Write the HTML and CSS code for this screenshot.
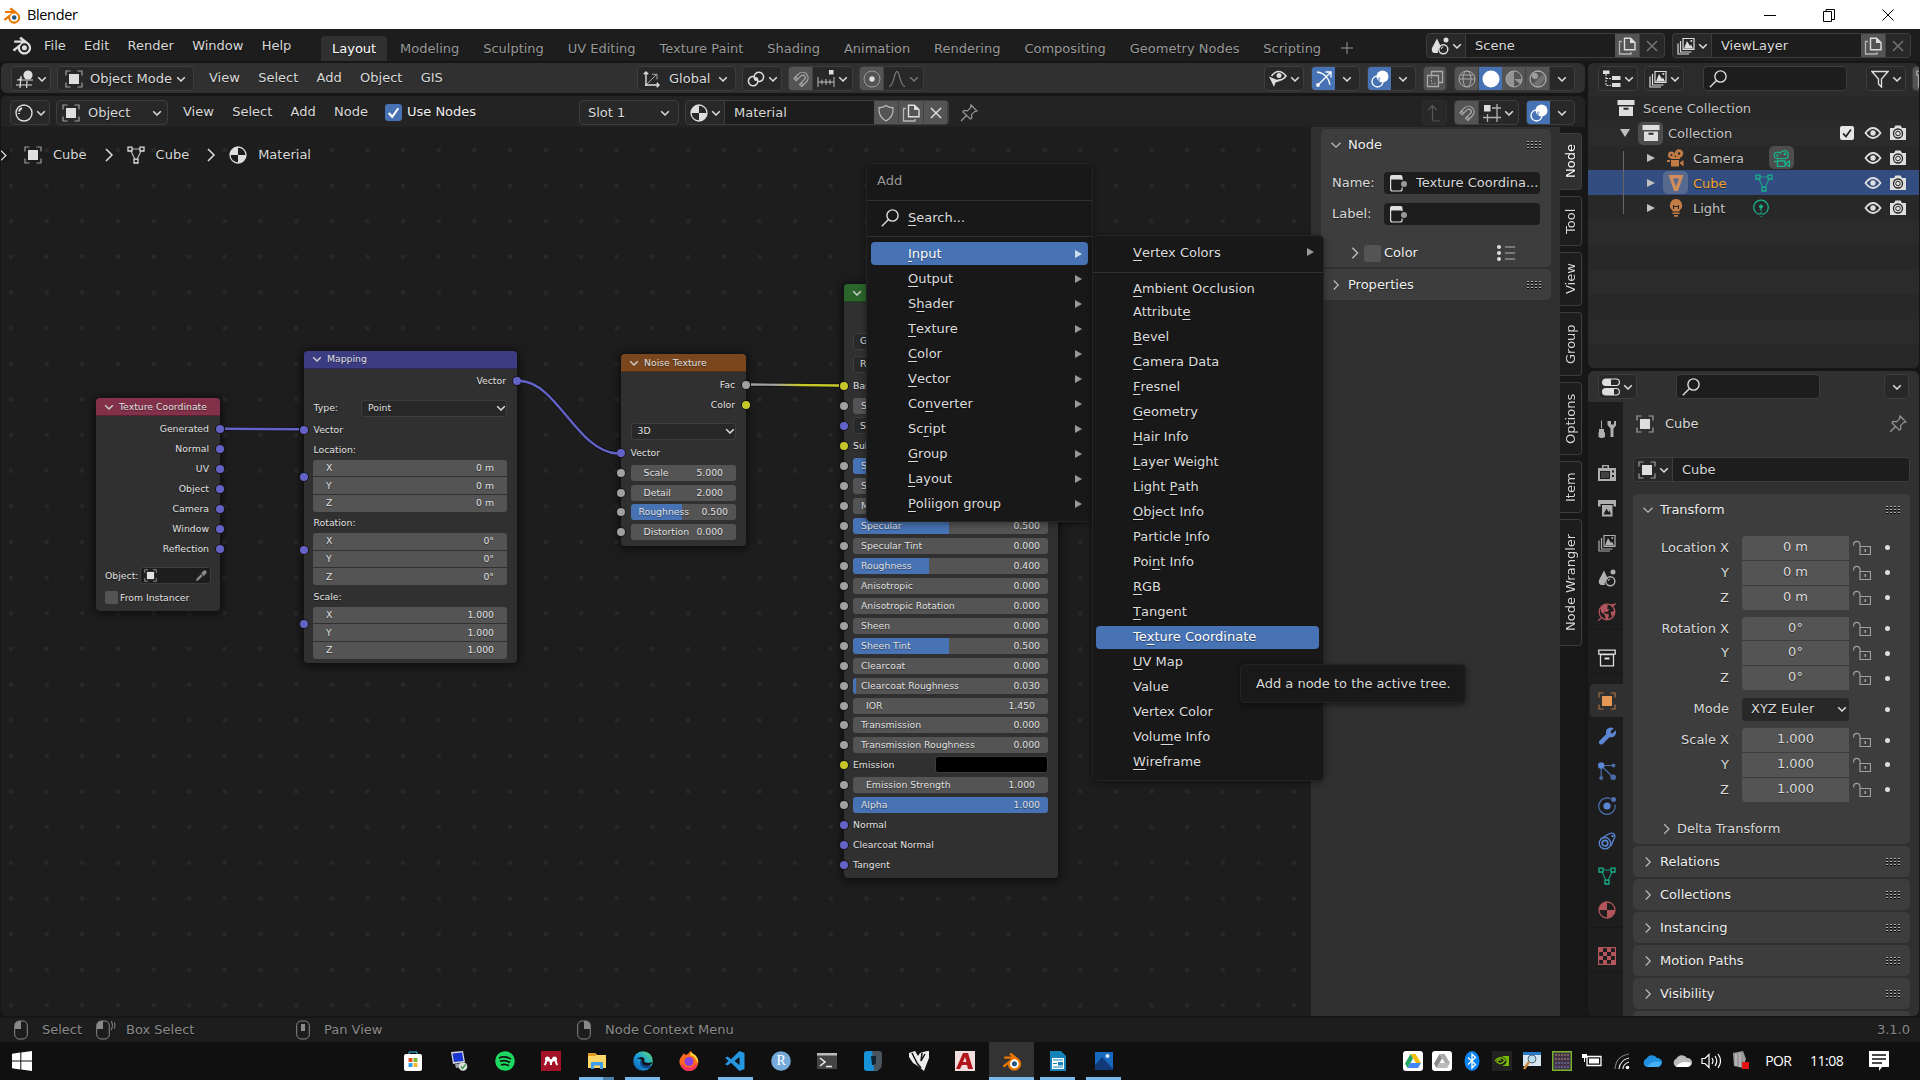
FILE: index.html
```html
<!DOCTYPE html>
<html lang="en">
<head>
<meta charset="utf-8">
<title>Blender</title>
<link rel="stylesheet" href="styles.css">
</head>
<body>
<svg class="sprite" aria-hidden="true">
  <symbol id="chev" viewBox="0 0 10 10"><path d="M1.2 3.2 5 7l3.8-3.8" fill="none" stroke="currentColor" stroke-width="1.5"/></symbol>
  <symbol id="right" viewBox="0 0 16 16"><path d="M5 2 11 8l-6 6" fill="none" stroke="currentColor" stroke-width="1.5"/></symbol>
  <symbol id="down" viewBox="0 0 16 16"><path d="M2 5 8 11l6-6" fill="none" stroke="currentColor" stroke-width="1.5"/></symbol>
  <symbol id="x" viewBox="0 0 16 16"><path d="M3.500 3.500l9 9M12.500 3.500l-9 9" fill="none" stroke="currentColor" stroke-width="1.300"/></symbol>
  <symbol id="logo" viewBox="0 0 18 18"><path d="M.5 13.300 8.500 7H2V5h6.700L6.500 3.200 8.200 1.500l7.300 6a6 6 0 1 1-10.300 4.700L2.300 14.800z" fill="currentColor"/><circle cx="11.200" cy="11.500" r="4" fill="var(--hole,#1d1d1d)"/><circle cx="11.200" cy="11.500" r="2.300" fill="var(--eye,currentColor)"/></symbol>
  <symbol id="object" viewBox="0 0 18 18"><path d="M1 5.500V1h4.500M12.500 1H17v4.500M17 12.500V17h-4.500M5.500 17H1v-4.500" fill="none" stroke="currentColor" stroke-width="1.200" opacity=".65"/><path d="M4 4h10v10H4z" fill="currentColor"/></symbol>
  <symbol id="mesh" viewBox="0 0 18 18"><path d="M4.200 5.500 8 13.500M13.800 5.500 10 13.500M5 3h8" fill="none" stroke="currentColor" stroke-width="1.200" opacity=".8"/><path d="M1 1.200h4V5H1zM13 1.200h4V5h-4zM7 13.200h4V17H7z" fill="none" stroke="currentColor" stroke-width="1.300"/></symbol>
  <symbol id="material" viewBox="0 0 18 18"><circle cx="9" cy="9" r="8" fill="none" stroke="currentColor" stroke-width="1.300"/><path d="M9 1v8H1a8 8 0 0 1 8-8zM9 9h8a8 8 0 0 1-8 8z" fill="currentColor"/></symbol>
  <symbol id="view3d" viewBox="0 0 18 18"><circle cx="12" cy="5" r="4.600" fill="currentColor"/><path d="M1 10h16M0 15h16M5 6 4 18M11 11l-.4 7M2 10l4-2" fill="none" stroke="currentColor" stroke-width="1.200"/></symbol>
  <symbol id="shader" viewBox="0 0 18 18"><circle cx="9" cy="9" r="8" fill="none" stroke="currentColor" stroke-width="1.400"/><path d="M4 7.500Q4.500 5 7 4M4 10V9" fill="none" stroke="currentColor" stroke-width="2"/></symbol>
  <symbol id="axes" viewBox="0 0 18 18"><path d="M3 16V2M.8 4.300 3 2l2.200 2.300M2 15h14M13.700 12.700 16 15l-2.300 2.300" fill="none" stroke="currentColor" stroke-width="1.400"/><path d="M3 15 13.500 4.500M9 4.300h5v5" fill="none" stroke="currentColor" opacity=".7"/></symbol>
  <symbol id="pivot" viewBox="0 0 18 18"><path d="M9.800 8.200A4.700 4.700 0 1 1 7 6.500M8.200 9.800A4.700 4.700 0 1 1 11 11.500" fill="none" stroke="currentColor" stroke-width="1.500"/><circle cx="9" cy="9" r="2" fill="currentColor"/></symbol>
  <symbol id="magnet" viewBox="0 0 18 18"><path d="M2 8.500 6.800 3.600a5.600 5.600 0 0 1 7.900 7.900L9.800 16.400l-2.200-2.200 4.900-4.900a2.400 2.400 0 0 0-3.500-3.500L4.200 10.700zM3.500 6.900l2.200 2.200M9.200 12.600l2.200 2.200" fill="none" stroke="currentColor" stroke-width="1.200"/></symbol>
  <symbol id="ticks" viewBox="0 0 18 18"><path d="M12 0h4.500v4.500H12z" fill="currentColor"/><path d="M1 7v10M1 12h16M17 7v10M5 9.500v5M9 9v6M13 9.500v5" fill="none" stroke="currentColor" opacity=".8"/></symbol>
  <symbol id="prop" viewBox="0 0 18 18"><circle cx="9" cy="9" r="8" fill="none" stroke="currentColor" opacity=".5"/><circle cx="9" cy="9" r="2.700" fill="currentColor"/></symbol>
  <symbol id="curve" viewBox="0 0 18 18"><path d="M1 16.500c5 0 5-15 8-15s3 15 8 15" fill="none" stroke="currentColor" stroke-width="1.300"/></symbol>
  <symbol id="vis" viewBox="0 0 18 18"><path d="M2.500 6Q9.500-3 17 6q-4 5-8.500 4" fill="none" stroke="currentColor" stroke-width="1.700"/><circle cx="10" cy="5.500" r="2.500" fill="currentColor"/><path d="M0 6.500 11 11l-4.500 1.500L5 17z" fill="currentColor"/></symbol>
  <symbol id="gizmo" viewBox="0 0 18 18"><path d="M2 2c7 1 12 6 13 13M2 16 15.500 2.500M10.500 2H16v5.500" fill="none" stroke="currentColor" stroke-width="1.300"/><circle cx="3" cy="15" r="1.900" fill="currentColor"/></symbol>
  <symbol id="overlay" viewBox="0 0 18 18"><circle cx="11.500" cy="6.500" r="6" fill="currentColor"/><circle cx="6.500" cy="11.500" r="5.500" fill="none" stroke="currentColor" stroke-width="1.300"/><path d="M7 7.500h2.500L9 11H6z" fill="#4772b3" opacity=".5"/></symbol>
  <symbol id="xray" viewBox="0 0 18 18"><path d="M1.500 5.500h11v11h-11zM5.500 5.500v-4h11v11h-4" fill="none" stroke="currentColor" stroke-width="1.300"/><path d="M5.500 7v6.500H11" fill="none" stroke="currentColor" stroke-dasharray="1.500 1.500"/></symbol>
  <symbol id="wire" viewBox="0 0 18 18"><g fill="none" stroke="currentColor"><circle cx="9" cy="9" r="8"/><ellipse cx="9" cy="9" rx="4" ry="8"/><path d="M1 9h16M2.500 5h13"/></g></symbol>
  <symbol id="solid" viewBox="0 0 18 18"><circle cx="9" cy="9" r="8.500" fill="currentColor"/></symbol>
  <symbol id="matprev" viewBox="0 0 18 18"><circle cx="9" cy="9" r="8" fill="none" stroke="currentColor"/><path d="M9 9V1a8 8 0 0 0 0 16zl6 5a8 8 0 0 0 2-5z" fill="currentColor" opacity=".75"/></symbol>
  <symbol id="rendered" viewBox="0 0 18 18"><circle cx="9" cy="9" r="8" fill="none" stroke="currentColor" stroke-width="1.300"/><path d="M4 14 14 4l2.500 5-7.500 8z" fill="currentColor" opacity=".35"/><circle cx="6" cy="6" r="3" fill="currentColor" opacity=".85"/></symbol>
  <symbol id="shield" viewBox="0 0 18 18"><path d="M9 1.500q3.500 2.500 7 2 .8 9.500-7 13.500-7.800-4-7-13.500 3.500.5 7-2z" fill="none" stroke="currentColor" stroke-width="1.200" opacity=".75"/></symbol>
  <symbol id="copy" viewBox="0 0 18 18"><path d="M6.500 1.200h6L17 5.500v7.300H6.500z" fill="none" stroke="currentColor" stroke-width="1.400"/><path d="M12 1v5h5z" fill="currentColor"/><path d="M4 4.500H1.500V17H13v-2" fill="none" stroke="currentColor" stroke-width="1.300" opacity=".7"/></symbol>
  <symbol id="pin" viewBox="0 0 18 18"><path d="m11 1 6 6-2.500.7-3 3 .3 3.300-1.500 1L3 8l1-1.500 3.500.3 3-3zM6.500 11.500 1 17" fill="none" stroke="currentColor" stroke-width="1.200"/></symbol>
  <symbol id="up" viewBox="0 0 18 18"><path d="M6.500 1.500v13q0 2.500 2.500 2.500h5M2.500 6l4-4.500 4 4.500" fill="none" stroke="currentColor" stroke-width="1.200"/></symbol>
  <symbol id="grid" viewBox="0 0 18 18"><path d="M1 1h6.500v6.500H1z" fill="currentColor"/><path d="M14 0v18M4.500 10v8M9 4h9M0 13.500h18" fill="none" stroke="currentColor" opacity=".75" stroke-width="1.300"/></symbol>
  <symbol id="scene" viewBox="0 0 18 18"><path d="M6 1.500 10 10a5 5 0 0 0-3 6H3q-3-1-2-5z" fill="currentColor"/><circle cx="15" cy="3" r="2.500" fill="currentColor"/><circle cx="12.300" cy="12.300" r="4.500" fill="none" stroke="currentColor" stroke-width="1.500"/><path d="M10.300 12a2 2 0 0 1 2-2" fill="none" stroke="currentColor"/></symbol>
  <symbol id="vlayer" viewBox="0 0 18 18"><path d="M6 1.500h11v10.800H6zM3.500 4v11H14.500M1 6.500V17h11" fill="none" stroke="currentColor" stroke-width="1.200"/><path d="M7 11.500 10 4l3 5 1-1.500 2 4z" fill="currentColor"/><circle cx="14.300" cy="4" r="1" fill="currentColor"/></symbol>
  <symbol id="outliner" viewBox="0 0 18 18"><path d="M0 .5h6.500V4H0zM9 6h8.500v4H9zM9 13h8.500v4H9z" fill="currentColor"/><path d="M3 4v11.500h5M3 8.500h5" fill="none" stroke="currentColor" stroke-dasharray="2 1"/></symbol>
  <symbol id="search" viewBox="0 0 18 18"><circle cx="11.500" cy="6.500" r="5.600" fill="none" stroke="currentColor" stroke-width="1.400"/><path d="M7.500 10.500.8 17.200" stroke="currentColor" stroke-width="1.400"/></symbol>
  <symbol id="funnel" viewBox="0 0 18 18"><path d="M1 1.500h16L10.500 9v8L7.500 14V9z" fill="none" stroke="currentColor" stroke-width="1.400"/></symbol>
  <symbol id="box" viewBox="0 0 18 18"><path d="M.5 1h17v5H.5zM2 7.500h14V17H2z" fill="currentColor"/><path d="M6.500 9.800h5" stroke="#282828" stroke-width="2"/></symbol>
  <symbol id="boxo" viewBox="0 0 18 18"><path d="M.8 1.200h16.400v4H.8zM2.500 5.500h13v11.300h-13z" fill="none" stroke="currentColor" stroke-width="1.300"/><path d="M6.500 9.500h5" stroke="currentColor" stroke-width="2"/></symbol>
  <symbol id="eye" viewBox="0 0 18 18"><path d="M1.500 9Q9-1 16.500 9 9 19 1.500 9z" fill="none" stroke="currentColor" stroke-width="1.800"/><circle cx="9" cy="9" r="2.700" fill="currentColor"/></symbol>
  <symbol id="cam" viewBox="0 0 18 18"><path d="M1 4h4l1.500-2.500h5L13 4h4v12H1z" fill="currentColor"/><circle cx="9" cy="9.500" r="4.500" fill="none" stroke="#282828" stroke-width="1.300"/><circle cx="9" cy="9.500" r="2.300" fill="none" stroke="#282828"/></symbol>
  <symbol id="movie" viewBox="0 0 18 18"><circle cx="4.500" cy="6" r="3.500" fill="currentColor"/><circle cx="12" cy="4.500" r="4.200" fill="currentColor"/><path d="M4 11h8v6.500H4zM12.500 14 16.500 11v6.500zM0 11h3v2H0zM4 8h9v2H4z" fill="currentColor"/><circle cx="4.500" cy="6" r="1" fill="#282828"/><circle cx="12" cy="4.500" r="1.200" fill="#282828"/></symbol>
  <symbol id="movieo" viewBox="0 0 18 18"><g fill="none" stroke="currentColor" stroke-width="1.300"><path d="M3.500 9.500a3.300 3.300 0 1 1 3.700-5 4.200 4.200 0 1 1 5.800 5.200zM4.500 12h7.500v5.500H4.500zM12 14.700l4.500-2.700v5.500zM1 12.500h3.500"/><circle cx="12" cy="5" r=".8"/><circle cx="4.300" cy="6.500" r=".5"/></g></symbol>
  <symbol id="tri" viewBox="0 0 18 18"><path d="M1.500 1h15L11 17H7zM6 4.500l3 8 3-8z" fill="currentColor" fill-rule="evenodd"/></symbol>
  <symbol id="bulb" viewBox="0 0 18 18"><path d="M9 0a6.300 6.300 0 0 0-4 11l.8 1.500h6.400L13 11A6.300 6.300 0 0 0 9 0zM5.500 13.500h7V15h-7zM7 16h4v1.800H7z" fill="currentColor"/><path d="M6.500 6v4M11.500 6v4M6.500 7.500h5" stroke="#282828" fill="none"/></symbol>
  <symbol id="lightd" viewBox="0 0 18 18"><path d="M6 15a7.300 7.300 0 1 1 6 0" fill="none" stroke="currentColor" stroke-width="1.300"/><circle cx="9" cy="7.500" r="1.900" fill="currentColor"/><path d="M9 9v9M7 14v2M11 14v2" stroke="currentColor" stroke-width="1.100" stroke-dasharray="3 1"/></symbol>
  <symbol id="props" viewBox="0 0 18 18"><rect x=".6" y="1" width="16.800" height="6.500" rx="3.200" fill="none" stroke="currentColor" stroke-width="1.200"/><path d="M4 1h5v6.500H4a3.200 3.200 0 0 1 0-6.500z" fill="currentColor"/><rect x=".6" y="10.500" width="16.800" height="6.500" rx="3.200" fill="none" stroke="currentColor" stroke-width="1.200"/><path d="M4 10.500h8V17H4a3.200 3.200 0 0 1 0-6.500z" fill="currentColor"/></symbol>
  <symbol id="tool" viewBox="0 0 18 18"><path d="M3.500.5v8" stroke="currentColor"/><path d="M1 9h5v2.500L7 13v4q-3.500 2-6.500 0v-4L1 11.500z" fill="currentColor"/><path d="M9.500 1v4l3 3.500V17h3V8.500l2.500-3V1l-2 0v3.500h-3V1z" fill="currentColor"/></symbol>
  <symbol id="render" viewBox="0 0 18 18"><path d="M0 4h4V1h7v3h7v13H0zM5.500 2.200V4h4V2.200z" fill="currentColor" fill-rule="evenodd"/><path d="M2 7h10v8H2zM14 6.500h2v2h-2zM14 11h2v2h-2z" fill="#1d1d1d"/><path d="M3 9h8M3 11h8M3 13h8" stroke="currentColor" opacity=".5"/></symbol>
  <symbol id="output" viewBox="0 0 18 18"><path d="M0 1h18v6.500h-2.500V5h-13v2.500H0zM4 6h10.500v11.500H4z" fill="currentColor"/><path d="m5.500 15.500 3-6 2 3.500 1-1.500 1.500 4z" fill="#1d1d1d"/></symbol>
  <symbol id="world" viewBox="0 0 18 18"><circle cx="9" cy="9" r="7.800" fill="none" stroke="currentColor" stroke-width="1.300"/><path d="M3 4.500 7 1.500l3 1-1 3 2.500 1L9 9l-2.500-.5L6 10l5 1.500-1 5-2.500-.5-.5-4-4-3zM12.500 9l4-1v3l-2.500 3zM12 1l3 3 2.500-3z" fill="currentColor"/><path d="m0 18 3-3M18 0l-3 3" stroke="currentColor" stroke-width="1.200"/></symbol>
  <symbol id="wrench" viewBox="0 0 18 18"><path d="M15.800 1.300 12.500 4.500l.5 1.500 1.500.5 3.200-3.200q1.200 4.700-2.200 6.400-1.800.9-3.700.2L4.500 17.200q-3.500 1-3.700-2.700L8.200 7Q7 2.500 10.700 1q2.500-1 5.100.3z" fill="currentColor"/></symbol>
  <symbol id="particles" viewBox="0 0 18 18"><circle cx="3.200" cy="3.500" r="3.200" fill="currentColor"/><g opacity=".75"><circle cx="15.500" cy="3.500" r="2" fill="currentColor"/><circle cx="3.200" cy="16" r="2" fill="currentColor"/><circle cx="15.200" cy="15.200" r="2.800" fill="currentColor"/><path d="M3.200 3.500h12M3.200 3.500V16M3.200 3.500l12 12" stroke="currentColor" stroke-width="1.200"/></g></symbol>
  <symbol id="physics" viewBox="0 0 18 18"><circle cx="9" cy="9" r="3.600" fill="currentColor"/><path d="M12.500 1.700A8.200 8.200 0 1 0 17 7.500" fill="none" stroke="currentColor" stroke-width="1.200" opacity=".8"/><circle cx="15.500" cy="2.500" r="2.500" fill="currentColor" opacity=".8"/></symbol>
  <symbol id="constraint" viewBox="0 0 18 18"><path d="M2.500 7 11.500 1.500q5-1.500 5.500 3L13 14" fill="none" stroke="currentColor" stroke-width="1.300"/><circle cx="7" cy="11.200" r="5.700" fill="none" stroke="currentColor" stroke-width="1.300"/><circle cx="7" cy="11.200" r="2.800" fill="none" stroke="currentColor" stroke-width="1.700"/><circle cx="14.500" cy="4" r="1.200" fill="currentColor"/></symbol>
  <symbol id="checker" viewBox="0 0 18 18"><path d="M.6.6h16.800v16.800H.6z" fill="none" stroke="currentColor" stroke-width="1.200"/><path d="M1 1h4v4H1zM9 1h4v4H9zM5 5h4v4H5zM13 5h4v4h-4zM1 9h4v4H1zM9 9h4v4H9zM5 13h4v4H5zM13 13h4v4h-4z" fill="currentColor"/></symbol>
  <symbol id="lock" viewBox="0 0 18 16"><path d="M7 6.500h10.500v8H7zM7 7V4.500a3.200 3.200 0 0 0-6.400 0v1" fill="none" stroke="currentColor" stroke-width="1.200"/><path d="M12.300 9v3" stroke="currentColor" stroke-width="1.500"/></symbol>
  <symbol id="node" viewBox="0 0 18 18"><path d="M1.600 4v11q0 2 2 2h7.500q2 0 2-2v-1.500M13.100 6V5" fill="none" stroke="currentColor" stroke-width="1.200"/><path d="M1 5.500V3q0-2 2-2h8.500q2 0 2 2v2.500z" fill="currentColor"/><circle cx="15" cy="10" r="3" fill="#999"/></symbol>
  <symbol id="list" viewBox="0 0 18 18"><path d="M8 3h10M8 9h10M8 15h10" stroke="currentColor" opacity=".75"/><g fill="currentColor"><circle cx="2" cy="3" r="2"/><circle cx="2" cy="9" r="2"/><circle cx="2" cy="15" r="2"/></g></symbol>
  <symbol id="grip" viewBox="0 0 15 8"><path d="M0 1.500h15M0 4.500h15M0 7.500h15" stroke="#000" stroke-dasharray="2 2"/><path d="M0 .5h15M0 3.500h15M0 6.500h15" stroke="#b0b0b0" stroke-dasharray="2 2"/></symbol>
  <symbol id="pick" viewBox="0 0 14 14"><path d="m1 13 1-3 5-5 2 2-5 5zM7 3.500l1-.5 2-2q2-1.500 3 0t0 3l-2 2-.5 1.500z" fill="currentColor"/></symbol>
  <symbol id="mouseL" viewBox="0 0 14 20"><rect x=".7" y="1" width="12.600" height="18" rx="4.500" fill="none" stroke="currentColor"/><path d="M1 9V5q0-4 6-4v8z" fill="currentColor"/></symbol>
  <symbol id="mouseM" viewBox="0 0 14 20"><rect x=".7" y="1" width="12.600" height="18" rx="4.500" fill="none" stroke="currentColor"/><rect x="5" y="4" width="4" height="7" fill="currentColor"/></symbol>
  <symbol id="mouseR" viewBox="0 0 14 20"><rect x=".7" y="1" width="12.600" height="18" rx="4.500" fill="none" stroke="currentColor"/><path d="M13 9V5q0-4-6-4v8z" fill="currentColor"/></symbol>
  <symbol id="tick" viewBox="0 0 16 16"><path d="m3.500 8.500 3.300 3.500 5.700-8" fill="none" stroke="currentColor" stroke-width="2"/></symbol>
</svg>

<header class="titlebar">
  <svg class="i app-logo"><use href="#logo"/></svg><span class="app-title">Blender</span>
  <div class="win"><svg viewBox="0 0 12 16"><path d="M0 8.500h12"/></svg><svg viewBox="0 0 12 16"><path d="M.5 4.500h8v10h-8zM3 4V2.500h8.500v10H9"/></svg><svg viewBox="0 0 12 16"><path d="m.5 2.500 11 11M11.500 2.500l-11 11"/></svg></div>
</header>

<nav class="topbar">
  <svg class="i brand"><use href="#logo"/></svg>
  <div class="menus"><span>File</span><span>Edit</span><span>Render</span><span>Window</span><span>Help</span></div>
  <div class="tabs"><span class="on">Layout</span><span>Modeling</span><span>Sculpting</span><span>UV Editing</span><span>Texture Paint</span><span>Shading</span><span>Animation</span><span>Rendering</span><span>Compositing</span><span>Geometry Nodes</span><span>Scripting</span><svg viewBox="0 0 12 12"><path d="M6 0v12M0 6h12"/></svg></div>
  <div class="ids">
    <div class="grp"><b class="c w38"><svg class="i"><use href="#scene"/></svg><svg class="v"><use href="#chev"/></svg></b><span class="field">Scene</span><b class="c w25 lit"><svg class="i"><use href="#copy"/></svg></b><b class="c w24 dim"><svg class="i"><use href="#x"/></svg></b></div>
    <div class="grp"><b class="c w38"><svg class="i"><use href="#vlayer"/></svg><svg class="v"><use href="#chev"/></svg></b><span class="field">ViewLayer</span><b class="c w25 lit"><svg class="i"><use href="#copy"/></svg></b><b class="c w24 dim"><svg class="i"><use href="#x"/></svg></b></div>
  </div>
</nav>

<main class="work">
  <section class="left">
    <div class="bar vbar">
      <div class="start">
        <div class="grp"><b class="c w38"><svg class="i"><use href="#view3d"/></svg><svg class="v"><use href="#chev"/></svg></b></div>
        <div class="grp sel mode"><svg class="i"><use href="#object"/></svg><span>Object Mode</span><svg class="v"><use href="#chev"/></svg></div>
        <div class="menus"><span>View</span><span>Select</span><span>Add</span><span>Object</span><span>GIS</span></div>
      </div>
      <div class="mid">
        <div class="grp sel orient"><svg class="i"><use href="#axes"/></svg><span>Global</span><svg class="v"><use href="#chev"/></svg></div>
        <div class="grp"><b class="c w38"><svg class="i"><use href="#pivot"/></svg><svg class="v"><use href="#chev"/></svg></b></div>
        <div class="grp"><b class="c w24 lit mute"><svg class="i"><use href="#magnet"/></svg></b><b class="c w39"><svg class="i"><use href="#ticks"/></svg><svg class="v"><use href="#chev"/></svg></b></div>
        <div class="grp"><b class="c w24 lit"><svg class="i"><use href="#prop"/></svg></b><b class="c w39 dim"><svg class="i"><use href="#curve"/></svg><svg class="v"><use href="#chev"/></svg></b></div>
      </div>
      <div class="end">
        <div class="grp"><b class="c w38"><svg class="i"><use href="#vis"/></svg><svg class="v"><use href="#chev"/></svg></b></div>
        <div class="grp"><b class="c w23 blue"><svg class="i"><use href="#gizmo"/></svg></b><b class="c w24"><svg class="v"><use href="#chev"/></svg></b></div>
        <div class="grp"><b class="c w23 blue"><svg class="i"><use href="#overlay"/></svg></b><b class="c w24"><svg class="v"><use href="#chev"/></svg></b></div>
        <div class="grp"><b class="c w22 lit mute"><svg class="i"><use href="#xray"/></svg></b></div>
        <div class="grp"><b class="c w24 lit mute"><svg class="i"><use href="#wire"/></svg></b><b class="c w23 blue"><svg class="i"><use href="#solid"/></svg></b><b class="c w24 lit mute"><svg class="i"><use href="#matprev"/></svg></b><b class="c w24 lit mute"><svg class="i"><use href="#rendered"/></svg></b><b class="c w24"><svg class="v"><use href="#chev"/></svg></b></div>
      </div>
    </div>

    <div class="editor">
      <div class="bar nbar">
        <div class="start">
          <div class="grp"><b class="c w38"><svg class="i"><use href="#shader"/></svg><svg class="v"><use href="#chev"/></svg></b></div>
          <div class="grp sel stype"><svg class="i"><use href="#object"/></svg><span>Object</span><svg class="v"><use href="#chev"/></svg></div>
          <div class="menus"><span>View</span><span>Select</span><span>Add</span><span>Node</span></div>
          <i class="check on"><svg><use href="#tick"/></svg></i><span class="usenodes">Use Nodes</span>
        </div>
        <div class="mid">
          <div class="grp sel slot"><span>Slot 1</span><svg class="v"><use href="#chev"/></svg></div>
          <div class="grp"><b class="c w38"><svg class="i"><use href="#material"/></svg><svg class="v"><use href="#chev"/></svg></b><span class="field">Material</span><b class="c w25 lit"><svg class="i"><use href="#shield"/></svg></b><b class="c w25 lit"><svg class="i"><use href="#copy"/></svg></b><b class="c w24 lit"><svg class="i"><use href="#x"/></svg></b></div>
          <svg class="i pin"><use href="#pin"/></svg>
        </div>
        <div class="end">
          <div class="grp off"><b class="c w23"><svg class="i"><use href="#up"/></svg></b></div>
          <div class="grp"><b class="c w24 lit mute"><svg class="i"><use href="#magnet"/></svg></b><b class="c w39"><svg class="i"><use href="#grid"/></svg><svg class="v"><use href="#chev"/></svg></b></div>
          <div class="grp"><b class="c w23 blue"><svg class="i"><use href="#overlay"/></svg></b><b class="c w24"><svg class="v"><use href="#chev"/></svg></b></div>
        </div>
      </div>

      <div class="body">
        <div class="canvas">
          <div class="crumbs"><svg class="i first"><use href="#right"/></svg><svg class="i"><use href="#object"/></svg><span>Cube</span><svg class="i sep"><use href="#right"/></svg><svg class="i"><use href="#mesh"/></svg><span>Cube</span><svg class="i sep"><use href="#right"/></svg><svg class="i"><use href="#material"/></svg><span>Material</span></div>

          <article class="node texcoord">
            <h3 class="red"><svg class="v"><use href="#chev"/></svg>Texture Coordinate</h3>
            <div class="r out">Generated<i class="s vec"></i></div>
            <div class="r out">Normal<i class="s vec"></i></div>
            <div class="r out">UV<i class="s vec"></i></div>
            <div class="r out">Object<i class="s vec"></i></div>
            <div class="r out">Camera<i class="s vec"></i></div>
            <div class="r out">Window<i class="s vec"></i></div>
            <div class="r out">Reflection<i class="s vec"></i></div>
            <div class="r objrow">Object:<span class="objfield"><svg class="o"><use href="#object"/></svg><svg class="p"><use href="#pick"/></svg></span></div>
            <div class="r instrow"><i class="cb"></i>From Instancer</div>
          </article>

          <article class="node mapping">
            <h3 class="blueh"><svg class="v"><use href="#chev"/></svg>Mapping</h3>
            <div class="r out">Vector<i class="s vec"></i></div>
            <div class="r typerow">Type:<span class="dd">Point<svg class="v"><use href="#chev"/></svg></span></div>
            <div class="r vrow">Vector<i class="s vec"></i></div>
            <div class="r">Location:</div>
            <div class="xyz"><i class="s vec"></i><p>X<em>0 m</em></p><p>Y<em>0 m</em></p><p>Z<em>0 m</em></p></div>
            <div class="r gap">Rotation:</div>
            <div class="xyz"><i class="s vec"></i><p>X<em>0°</em></p><p>Y<em>0°</em></p><p>Z<em>0°</em></p></div>
            <div class="r gap">Scale:</div>
            <div class="xyz"><i class="s vec"></i><p>X<em>1.000</em></p><p>Y<em>1.000</em></p><p>Z<em>1.000</em></p></div>
          </article>

          <article class="node noise">
            <h3 class="orange"><svg class="v"><use href="#chev"/></svg>Noise Texture</h3>
            <div class="r out">Fac<i class="s"></i></div>
            <div class="r out">Color<i class="s col"></i></div>
            <div class="r ddrow"><span class="dd">3D<svg class="v"><use href="#chev"/></svg></span></div>
            <div class="r vrow">Vector<i class="s vec"></i></div>
            <div class="r"><i class="s"></i><div class="num"><span>Scale</span><em>5.000</em></div></div>
            <div class="r"><i class="s"></i><div class="num"><span>Detail</span><em>2.000</em></div></div>
            <div class="r tight"><i class="s"></i><div class="num sl" style="--v:48.5%"><span>Roughness</span><em>0.500</em></div></div>
            <div class="r"><i class="s"></i><div class="num"><span>Distortion</span><em>0.000</em></div></div>
          </article>

          <article class="node bsdf">
            <h3 class="green"><svg class="v"><use href="#chev"/></svg></h3>
            <div class="r ddrow"><span class="dd">GGX</span></div>
            <div class="r ddrow2"><span class="dd">Rand</span></div>
            <div class="r base">Base<i class="s col"></i></div>
            <div class="r"><i class="s"></i><div class="num sl" style="--v:0%"><span>Subs</span></div></div>
            <div class="r"><i class="s vec"></i><span class="dd">Subs</span></div>
            <div class="r">Subs<i class="s col"></i></div>
            <div class="r"><i class="s"></i><div class="num sl" style="--v:40%"><span>Subs</span></div></div>
            <div class="r"><i class="s"></i><div class="num sl" style="--v:0%"><span>Subs</span></div></div>
            <div class="r"><i class="s"></i><div class="num sl" style="--v:0%"><span>Meta</span></div></div>
            <div class="r"><i class="s"></i><div class="num sl" style="--v:49.2%"><span>Specular</span><em>0.500</em></div></div>
            <div class="r"><i class="s"></i><div class="num sl" style="--v:0%"><span>Specular Tint</span><em>0.000</em></div></div>
            <div class="r"><i class="s"></i><div class="num sl" style="--v:39%"><span>Roughness</span><em>0.400</em></div></div>
            <div class="r"><i class="s"></i><div class="num sl" style="--v:0%"><span>Anisotropic</span><em>0.000</em></div></div>
            <div class="r"><i class="s"></i><div class="num sl" style="--v:0%"><span>Anisotropic Rotation</span><em>0.000</em></div></div>
            <div class="r"><i class="s"></i><div class="num sl" style="--v:0%"><span>Sheen</span><em>0.000</em></div></div>
            <div class="r"><i class="s"></i><div class="num sl" style="--v:49.2%"><span>Sheen Tint</span><em>0.500</em></div></div>
            <div class="r"><i class="s"></i><div class="num sl" style="--v:0%"><span>Clearcoat</span><em>0.000</em></div></div>
            <div class="r"><i class="s"></i><div class="num sl" style="--v:1.5%"><span>Clearcoat Roughness</span><em>0.030</em></div></div>
            <div class="r"><i class="s"></i><div class="num"><span>IOR</span><em>1.450</em></div></div>
            <div class="r tight"><i class="s"></i><div class="num sl" style="--v:0%"><span>Transmission</span><em>0.000</em></div></div>
            <div class="r"><i class="s"></i><div class="num sl" style="--v:0%"><span>Transmission Roughness</span><em>0.000</em></div></div>
            <div class="r">Emission<i class="s col"></i><span class="swatch"></span></div>
            <div class="r"><i class="s"></i><div class="num"><span>Emission Strength</span><em>1.000</em></div></div>
            <div class="r"><i class="s"></i><div class="num sl" style="--v:100%"><span>Alpha</span><em>1.000</em></div></div>
            <div class="r">Normal<i class="s vec"></i></div>
            <div class="r">Clearcoat Normal<i class="s vec"></i></div>
            <div class="r">Tangent<i class="s vec"></i></div>
          </article>

          <svg class="links" viewBox="1 127 1310 889">
            <defs><linearGradient id="fy" gradientUnits="userSpaceOnUse" x1="750" y1="385" x2="842" y2="385"><stop offset="0" stop-color="#a1a1a1"/><stop offset=".25" stop-color="#a1a1a1"/><stop offset=".55" stop-color="#c7c729"/></linearGradient></defs>
            <g fill="none" stroke="#111" stroke-width="4"><path d="M225 428.700 299 429.300M521 381c36 2 56 70 96 72.500M751 384.500 839 385.500"/></g>
            <g fill="none" stroke-width="2.400"><path d="M225 428.700 299 429.300M521 381c36 2 56 70 96 72.500" stroke="#6363c7"/><path d="M751 384.500 839 385.500" stroke="url(#fy)"/></g>
          </svg>
        </div>

        <aside class="side">
          <div class="panel">
            <div class="ph"><svg class="i ar"><use href="#down"/></svg>Node<svg class="grip"><use href="#grip"/></svg></div>
            <div class="frow"><label>Name:</label><span class="nf"><svg class="i"><use href="#node"/></svg>Texture Coordina...</span></div>
            <div class="frow"><label>Label:</label><span class="nf"><svg class="i"><use href="#node"/></svg></span></div>
            <div class="crow"><svg class="i ar"><use href="#right"/></svg><i class="check"></i><span>Color</span><svg class="i lst"><use href="#list"/></svg></div>
          </div>
          <div class="panel"><div class="ph"><svg class="i ar"><use href="#right"/></svg>Properties<svg class="grip"><use href="#grip"/></svg></div></div>
        </aside>
        <div class="vtabs"><span class="t1 on">Node</span><span class="t2">Tool</span><span class="t3">View</span><span class="t4">Group</span><span class="t5">Options</span><span class="t6">Item</span><span class="t7">Node Wrangler</span></div>
      </div>
    </div>
  </section>

  <section class="right">
    <div class="outliner">
      <div class="bar obar">
        <div class="grp"><b class="c w38"><svg class="i"><use href="#outliner"/></svg><svg class="v"><use href="#chev"/></svg></b></div>
        <div class="grp"><b class="c w38"><svg class="i"><use href="#vlayer"/></svg><svg class="v"><use href="#chev"/></svg></b></div>
        <div class="grp find"><svg class="i"><use href="#search"/></svg></div>
        <div class="grp flt"><b class="c w38"><svg class="i"><use href="#funnel"/></svg><svg class="v"><use href="#chev"/></svg></b></div>
        <div class="grp newc"><b class="c w24 lit mute"><svg class="i"><use href="#boxo"/></svg></b></div>
      </div>
      <div class="rows">
        <div class="row root"><svg class="i"><use href="#box"/></svg><span>Scene Collection</span></div>
        <div class="row coll"><i class="tdown"></i><b class="halo"><svg class="i"><use href="#box"/></svg></b><span>Collection</span><div class="tog"><i class="wcheck"><svg><use href="#tick"/></svg></i><svg class="i"><use href="#eye"/></svg><svg class="i"><use href="#cam"/></svg></div></div>
        <div class="row item"><i class="tright"></i><b class="ic"><svg class="i brown"><use href="#movie"/></svg></b><span>Camera</span><b class="halo d1"><svg class="i teal"><use href="#movieo"/></svg></b><div class="tog"><svg class="i"><use href="#eye"/></svg><svg class="i"><use href="#cam"/></svg></div></div>
        <div class="row item picked"><i class="tright"></i><b class="ic halo2"><svg class="i peach"><use href="#tri"/></svg></b><span>Cube</span><svg class="i teal d2"><use href="#mesh"/></svg><div class="tog"><svg class="i"><use href="#eye"/></svg><svg class="i"><use href="#cam"/></svg></div></div>
        <div class="row item"><i class="tright"></i><b class="ic"><svg class="i brown"><use href="#bulb"/></svg></b><span>Light</span><svg class="i teal d3"><use href="#lightd"/></svg><div class="tog"><svg class="i"><use href="#eye"/></svg><svg class="i"><use href="#cam"/></svg></div></div>
        <i class="tree"></i>
      </div>
    </div>

    <div class="props">
      <div class="bar pbar">
        <div class="grp"><b class="c w37"><svg class="i"><use href="#props"/></svg><svg class="v"><use href="#chev"/></svg></b></div>
        <div class="grp find"><svg class="i"><use href="#search"/></svg></div>
        <div class="grp opt"><b class="c w23"><svg class="v"><use href="#chev"/></svg></b></div>
      </div>
      <div class="pbody">
        <div class="ptabs">
          <b class="g1"><svg class="i"><use href="#tool"/></svg></b>
          <b><svg class="i"><use href="#render"/></svg></b><b><svg class="i"><use href="#output"/></svg></b><b><svg class="i"><use href="#vlayer"/></svg></b><b><svg class="i"><use href="#scene"/></svg></b><b class="rose ln"><svg class="i"><use href="#world"/></svg></b>
          <b class="g2 ln"><svg class="i"><use href="#boxo"/></svg></b>
          <b class="g3 act"><svg class="i"><use href="#object"/></svg></b>
          <b class="sky"><svg class="i"><use href="#wrench"/></svg></b><b class="sky"><svg class="i"><use href="#particles"/></svg></b><b class="sky"><svg class="i"><use href="#physics"/></svg></b><b class="sky"><svg class="i"><use href="#constraint"/></svg></b><b class="tl"><svg class="i"><use href="#mesh"/></svg></b><b class="rose ln"><svg class="i"><use href="#material"/></svg></b>
          <b class="g4 rose ln"><svg class="i"><use href="#checker"/></svg></b>
        </div>
        <div class="pmain">
          <div class="pcrumb"><svg class="i"><use href="#object"/></svg><span>Cube</span><svg class="i pin"><use href="#pin"/></svg></div>
          <div class="grp idb"><b class="c w38"><svg class="i"><use href="#object"/></svg><svg class="v"><use href="#chev"/></svg></b><span class="field">Cube</span></div>
          <div class="panel">
            <div class="ph"><svg class="i ar"><use href="#down"/></svg>Transform<svg class="grip"><use href="#grip"/></svg></div>
            <div class="vecs">
              <div class="vr"><label>Location X</label><em>0 m</em><svg class="lock"><use href="#lock"/></svg><i></i></div>
              <div class="vr"><label>Y</label><em>0 m</em><svg class="lock"><use href="#lock"/></svg><i></i></div>
              <div class="vr"><label>Z</label><em>0 m</em><svg class="lock"><use href="#lock"/></svg><i></i></div>
            </div>
            <div class="vecs">
              <div class="vr"><label>Rotation X</label><em>0°</em><svg class="lock"><use href="#lock"/></svg><i></i></div>
              <div class="vr"><label>Y</label><em>0°</em><svg class="lock"><use href="#lock"/></svg><i></i></div>
              <div class="vr"><label>Z</label><em>0°</em><svg class="lock"><use href="#lock"/></svg><i></i></div>
            </div>
            <div class="vecs one"><div class="vr"><label>Mode</label><span class="euler">XYZ Euler<svg class="v"><use href="#chev"/></svg></span><i></i></div></div>
            <div class="vecs">
              <div class="vr"><label>Scale X</label><em>1.000</em><svg class="lock"><use href="#lock"/></svg><i></i></div>
              <div class="vr"><label>Y</label><em>1.000</em><svg class="lock"><use href="#lock"/></svg><i></i></div>
              <div class="vr"><label>Z</label><em>1.000</em><svg class="lock"><use href="#lock"/></svg><i></i></div>
            </div>
            <div class="delta"><svg class="i ar"><use href="#right"/></svg>Delta Transform</div>
          </div>
          <div class="panel"><div class="ph"><svg class="i ar"><use href="#right"/></svg>Relations<svg class="grip"><use href="#grip"/></svg></div></div>
          <div class="panel"><div class="ph"><svg class="i ar"><use href="#right"/></svg>Collections<svg class="grip"><use href="#grip"/></svg></div></div>
          <div class="panel"><div class="ph"><svg class="i ar"><use href="#right"/></svg>Instancing<svg class="grip"><use href="#grip"/></svg></div></div>
          <div class="panel"><div class="ph"><svg class="i ar"><use href="#right"/></svg>Motion Paths<svg class="grip"><use href="#grip"/></svg></div></div>
          <div class="panel"><div class="ph"><svg class="i ar"><use href="#right"/></svg>Visibility<svg class="grip"><use href="#grip"/></svg></div></div>
          <div class="panel last"></div>
        </div>
      </div>
    </div>
  </section>
</main>

<div class="menu add">
  <div class="mt">Add</div>
  <div class="mi srch"><svg class="i"><use href="#search"/></svg><u>S</u>earch...</div>
  <div class="ml">
    <div class="mi sub hot"><u>I</u>nput</div><div class="mi sub"><u>O</u>utput</div><div class="mi sub">S<u>h</u>ader</div><div class="mi sub"><u>T</u>exture</div><div class="mi sub"><u>C</u>olor</div><div class="mi sub"><u>V</u>ector</div><div class="mi sub">Co<u>n</u>verter</div><div class="mi sub">Sc<u>r</u>ipt</div><div class="mi sub"><u>G</u>roup</div><div class="mi sub"><u>L</u>ayout</div><div class="mi sub"><u>P</u>oliigon group</div>
  </div>
</div>
<div class="menu input">
  <div class="mi sub vc"><u>V</u>ertex Colors</div>
  <div class="ml">
    <div class="mi"><u>A</u>mbient Occlusion</div><div class="mi">Attribut<u>e</u></div><div class="mi"><u>B</u>evel</div><div class="mi"><u>C</u>amera Data</div><div class="mi"><u>F</u>resnel</div><div class="mi"><u>G</u>eometry</div><div class="mi"><u>H</u>air Info</div><div class="mi"><u>L</u>ayer Weight</div><div class="mi">Light <u>P</u>ath</div><div class="mi"><u>O</u>bject Info</div><div class="mi">Particle <u>I</u>nfo</div><div class="mi">Poi<u>n</u>t Info</div><div class="mi"><u>R</u>GB</div><div class="mi"><u>T</u>angent</div><div class="mi hot">Te<u>x</u>ture Coordinate</div><div class="mi"><u>U</u>V Map</div><div class="mi">Value</div><div class="mi">Vertex Color</div><div class="mi">Volu<u>m</u>e Info</div><div class="mi"><u>W</u>ireframe</div>
  </div>
</div>
<div class="tooltip">Add a node to the active tree.</div>

<footer class="status">
  <span class="k1"><svg><use href="#mouseL"/></svg>Select</span>
  <span class="k2"><svg><use href="#mouseL"/></svg><svg class="drag" viewBox="0 0 5 20"><path d="M.5 1q2 4 0 9M3.500 2.500q1 3 0 6"/></svg>Box Select</span>
  <span class="k3"><svg><use href="#mouseM"/></svg>Pan View</span>
  <span class="k4"><svg><use href="#mouseR"/></svg>Node Context Menu</span>
  <span class="ver">3.1.0</span>
</footer>

<footer class="taskbar">
  <svg class="start-btn" viewBox="0 0 20 20"><path d="M0 2.800 8.300 1.600v7.900H0zM9.300 1.500 20 0v9.500H9.300zM0 10.500h8.300v7.900L0 17.200zM9.300 10.500H20V20L9.300 18.500z" fill="#fff"/></svg>
  <div class="apps">
    <b><svg viewBox="0 0 20 20"><path d="M6 4V1h8v3" fill="none" stroke="#38b6e8"/><rect x="1" y="3" width="18" height="17" rx="2" fill="#fff"/><path d="M5.500 7h4v4h-4z" fill="#e8502a"/><path d="M10.500 7h4v4h-4z" fill="#7db92c"/><path d="M5.500 12h4v4h-4z" fill="#2aa0e8"/><path d="M10.500 12h4v4h-4z" fill="#f7b82b"/></svg></b>
    <b><svg viewBox="0 0 20 20"><path d="m2 1 12-1 2 11-12 2z" fill="#cdd3dc"/><path d="m3.500 2.500 9.500-1 1.500 8.500-9.500 1z" fill="#1b36d0"/><path d="m6 13 9-1v4l-8 1z" fill="#9aa3ad"/><circle cx="14" cy="15.500" r="4.300" fill="#d8dcd8"/><path d="m12 15.500 1.500 2 3-4" stroke="#3a9a48" stroke-width="1.300" fill="none"/></svg></b>
    <b><svg viewBox="0 0 20 20"><circle cx="10" cy="10" r="9.800" fill="#1ed760"/><path d="M4 7q6-2.500 12 1M5 10.500q5-2 10 1M6 14q4-1.500 8 .8" stroke="#111" stroke-width="1.700" fill="none"/></svg></b>
    <b><svg viewBox="0 0 20 20"><path d="M0 0h20v20H0z" fill="#a31226"/><path d="M3.500 14q1.500-1 1.500-4M10 14v-4M16.500 14Q15 13 15 10" stroke="#fff" stroke-width="2" fill="none"/><g fill="#fff"><circle cx="6.500" cy="8" r="2.500"/><circle cx="13.500" cy="8" r="2.500"/><circle cx="10" cy="10" r="2"/></g></svg></b>
    <b class="run multi"><svg viewBox="0 0 20 20"><path d="M1 2h7l2 2h9v13H1z" fill="#ffd766"/><path d="M1 2h7l1 3H1z" fill="#e39b1d"/><path d="M4 18v-7h12v7h-3v-3.500H7V18z" fill="#3e9fe8"/></svg></b>
    <b class="run"><svg viewBox="0 0 20 20"><defs><linearGradient id="eg" x1="0" y1="1" x2="1" y2="0"><stop offset="0" stop-color="#0c5bb5"/><stop offset=".5" stop-color="#1da1dc"/><stop offset="1" stop-color="#5fdc62"/></linearGradient></defs><circle cx="10" cy="10" r="9.800" fill="url(#eg)"/><path d="M7 11q0 8 10 6 3-3-2-3-5 0-4.500-3.500Q7 8 7 11z" fill="#104a8e"/><path d="M11 10.500q1-2 0-3.500-4-3-8 2 4-3 6 1 0 6 8 4 2-1 2-3-5 2-8-.500z" fill="#111"/></svg></b>
    <b><svg viewBox="0 0 20 20"><path d="M3 5 5 2l1 2 3-1q2-3 3-3 0 2 4 4 4 4 3 9-2 7-9 7T.5 12Q0 8 3 5z" fill="#ff6a1d"/><path d="M12 0q0 2 4 4 4 4 3 8l-4-6-4-2z" fill="#ffd43b"/><circle cx="10" cy="10.500" r="4.500" fill="#8a3fe0"/><path d="M2 12q8 9 16 0-1 8-8 8T2 12z" fill="#ff2f64"/></svg></b>
    <b class="run"><svg viewBox="0 0 20 20"><path d="m14.500 0 5 2v16l-5 2L6 11.800 2.500 14.500 0 13.200 3.500 10 0 6.800l2.500-1.300L6 8.200zM14.500 6 9.500 10l5 4z" fill="#2596e0" fill-rule="evenodd"/></svg></b>
    <b><svg viewBox="0 0 20 20"><circle cx="10" cy="10" r="9.800" fill="#75aadb"/></svg><span class="rl">R</span></b>
    <b><svg viewBox="0 0 20 20"><path d="M0 2h20v16H0z" fill="#444"/><path d="M0 2h20v2.500H0z" fill="#bbb"/><path d="m3 7 5 4-5 4M9 15.500h6" stroke="#eee" stroke-width="1.600" fill="none"/></svg></b>
    <b><svg viewBox="0 0 20 20"><path d="M1 3q0-3 3-3h11v20H4q-3 0-3-3z" fill="#1794d8"/><path d="M9 0h7q3 0 3 3v9q0 8-8 8z" fill="#4a5560"/><path d="M8 5h5v6q0 3-4 3z" fill="#123"/></svg></b>
    <b><svg viewBox="0 0 20 20"><path d="M0 2 6 0l3 5 2-3 7-2h2v7l-2 5-3 8-6-5-5-3-4-6z" fill="#eee"/><path d="m3 2 5 10M13 2l-1 8 4-7M8 12l4 5" stroke="#111" stroke-width="1.500" fill="none"/></svg></b>
    <b><svg viewBox="0 0 20 20"><path d="M0 0h20v20H0z" fill="#f1dfe0"/><path d="M8 2h5l5 16h-5l-1-4H7l-2 4H1zM10 6l-2 5h3.500z" fill="#b3161c" fill-rule="evenodd"/></svg></b>
    <b class="run act"><svg class="bl"><use href="#logo"/></svg></b>
    <b class="run"><svg viewBox="0 0 20 20"><path d="M2 0h11l5 5v15H2z" fill="#1583b8"/><path d="M4 7h12v11H4z" fill="#fff"/><path d="M5 9h10M5 16h10M5 12.500h4" stroke="#1583b8"/><path d="M10 11h5v3.500h-5z" fill="#1583b8"/></svg></b>
    <b class="run"><svg viewBox="0 0 20 20"><path d="M1 1h18v18H1z" fill="#1769c0"/><path d="m1 14 7-8 11 12v1H1z" fill="#123a78"/><circle cx="13.500" cy="5" r="2" fill="#d8ecff"/></svg></b>
  </div>
  <div class="tray">
    <svg viewBox="0 0 20 20"><rect width="20" height="20" rx="3" fill="#fff"/><path d="M7.500 3h5l5.500 9h-5z" fill="#fbbc05"/><path d="M7.500 3 2 12.500 4.500 17 10 7.500z" fill="#1fa463"/><path d="M7.500 12H18l-3 5H4.500z" fill="#4285f4"/></svg>
    <svg viewBox="0 0 20 20"><rect width="20" height="20" rx="3" fill="#fff"/><path d="M7.500 3h5l5.500 9h-5z" fill="#aaa"/><path d="M7.500 3 2 12.500 4.500 17 10 7.500z" fill="#888"/><path d="M7.500 12H18l-3 5H4.500z" fill="#bbb"/></svg>
    <svg viewBox="0 0 20 20"><ellipse cx="10" cy="10" rx="7.500" ry="10" fill="#0a84f0"/><path d="m6 6.500 7.500 7L10 17V3l3.500 3.500-7.500 7" stroke="#fff" stroke-width="1.300" fill="none"/></svg>
    <svg viewBox="0 0 20 20"><path d="M0 0h20v20H0z" fill="#222"/><path d="M3 10q5-6 10-1-4 6-8 2 1-3 4-2" fill="none" stroke="#76b900" stroke-width="1.400"/><path d="M10 5h7v10h-7q6-2 4-7z" fill="#76b900"/></svg>
    <svg viewBox="0 0 20 20"><path d="M1 1h18v14H1z" fill="#d8e6f2"/><path d="M1 1h18v3H1z" fill="#2a79c8"/><circle cx="10" cy="8" r="4" fill="#bde" stroke="#567"/><path d="m7 11-5 7" stroke="#c98a3d" stroke-width="2.500"/></svg>
    <svg viewBox="0 0 20 20"><path d="M.7.700h18.600v18.600H.7z" fill="#423348" stroke="#7ab32c" stroke-width="1.400"/><path d="M3 4h14M3 8h14" stroke="#b09070" stroke-dasharray="2 1"/><path d="M3 12h14M3 16h14" stroke="#7a8ab5" stroke-dasharray="2 1"/></svg>
    <svg viewBox="0 0 20 20"><path d="M5 5.500h14v9H5z" fill="none" stroke="#fff" stroke-width="1.300"/><path d="M7 7.500h10v5H7zM0 3h5v4H3v4H2V7H0z" fill="#fff"/></svg>
    <svg viewBox="0 0 20 20"><g fill="none" stroke="#ddd" stroke-width="1.200"><path d="M3 18Q4 5 17 3" opacity=".5"/><path d="M7 18Q8 9 17 7M11 18q0-5 6-7"/></g><circle cx="15.500" cy="16.500" r="1.800" fill="#fff"/></svg>
    <svg viewBox="0 0 20 20"><path d="M5 16a4.500 4.500 0 0 1-.5-8.500A6 6 0 0 1 15 7a4.500 4.500 0 0 1 1 9z" fill="#1f90e0"/><path d="M5 16q5-7 14-5-1 5-4 5z" fill="#45b0f2"/></svg>
    <svg viewBox="0 0 20 20"><path d="M5 16a4.500 4.500 0 0 1-.5-8.500A6 6 0 0 1 15 7a4.500 4.500 0 0 1 1 9z" fill="#bbb"/><path d="M4 16q4-7 15-4-1 4-4 4z" fill="#fff"/></svg>
    <svg viewBox="0 0 20 20"><path d="M1 7.500h3l4-4v13l-4-4H1zM11 7q2 3 0 6M14 5q3.500 5 0 10M17 3q5 7 0 14" fill="none" stroke="#fff" stroke-width="1.200"/></svg>
    <svg viewBox="0 0 20 20"><path d="M2 2 12 0l3 8-3 9-9-2z" fill="#999"/><path d="M5 3v12M9 2v14" stroke="#ccc"/><path d="M11 11h7v7h-7z" fill="#e31313"/></svg>
    <span class="lang">POR</span><span class="clock">11:08</span>
    <svg class="note" viewBox="0 0 20 20"><path d="M0 0h20v16h-7l-3 4v-4H0z" fill="#fff"/><path d="M3 4h14M3 8h14M3 12h10" stroke="#111" stroke-width="1.300"/></svg>
  </div>
</footer>
</body>
</html>
```
FILE: styles.css
```css
* { box-sizing: border-box; }
body {
  margin: 0; width: 1920px; height: 1080px; overflow: hidden; position: relative;
  display: flex; flex-direction: column; background: #161616; color: #d9d9d9;
  font: 13px/16px "DejaVu Sans", sans-serif; white-space: nowrap;
  text-shadow: 0 1px 1px rgba(0, 0, 0, .45);
}
.sprite { position: absolute; width: 0; height: 0; }
svg { flex: none; display: block; }
b, em, i, h3, p { font-weight: normal; font-style: normal; margin: 0; }
.i { width: 18px; height: 18px; color: #dedede; }
.v { width: 10px; height: 10px; color: #dedede; }

/* window title */
.titlebar { height: 29px; flex: none; background: #fff; color: #000; display: flex; align-items: center; text-shadow: none; padding-left: 3px; }
.app-logo { --hole: #fff; --eye: #265787; color: #ea7600; }
.app-title { font: 14.5px/20px "Open Sans", "Noto Sans", sans-serif; letter-spacing: -.35px; margin-left: 6px; }
.win { margin-left: auto; display: flex; gap: 47px; padding-right: 26px; }
.win svg { width: 12px; height: 16px; fill: none; stroke: #000; }

/* top bar */
.topbar { height: 34px; flex: none; background: #1d1d1d; border-bottom: 2px solid #161616; display: flex; }
.brand { width: 20px; height: 20px; margin: 6px 0 0 12px; }
.menus { display: flex; gap: 18.300px; }
.topbar .menus { margin: 9px 0 0 12px; width: 277px; }
.tabs { display: flex; margin-top: 7px; color: #989898; }
.tabs span { height: 25px; padding: 5px 11px 0; margin-right: 1.900px; }
.tabs .on { background: #303030; color: #fff; border-radius: 4px 4px 0 0; }
.tabs svg { width: 12px; height: 12px; margin: 6px 0 0 7px; stroke: #989898; fill: none; }
.ids { margin-left: auto; display: flex; gap: 7px; padding: 4px 9px 0 0; }
.ids .grp { height: 25px; }

/* button groups */
.grp { display: flex; height: 25px; border: 1px solid #3d3d3d; border-radius: 4px; background: #282828; overflow: hidden; flex: none; }
.c { display: flex; align-items: center; justify-content: center; gap: 3px; flex: none; }
.w22 { width: 22px; } .w23 { width: 23px; } .w24 { width: 24px; } .w25 { width: 25px; }
.w37 { width: 37px; } .w38 { width: 38px; } .w39 { width: 39px; }
.field { width: 150px; background: #1d1d1d; border-left: 1px solid #3d3d3d; padding: 4px 9px 0; }
.lit { background: #545454; border-right: 1px solid #424242; }
.mute .i { color: #aaa; }
.dim .i, .dim .v { color: #757575; }
.blue { background: #4772b3; }
.blue .i { color: #fff; }
.sel { align-items: center; padding: 0 8px; }
.sel .v { margin-left: auto; }
.sel .i { margin-right: 8px; }

/* areas */
.work { flex: none; height: 955px; display: flex; padding: 0 1px 2px; gap: 3px; }
.left { width: 1584px; display: flex; flex-direction: column; gap: 3px; }
.bar { display: flex; align-items: flex-start; padding-top: 3px; flex: none; }
.vbar { height: 30px; background: #303030; border-radius: 6px; }
.nbar { height: 31px; padding-top: 4px; background: #232323; }
.start { display: flex; gap: 6px; width: 636px; padding-left: 10px; }
.start .menus { margin: 4px 0 0 9px; }
.mid { display: flex; gap: 6px; }
.end { display: flex; gap: 7px; margin-left: auto; padding-right: 10px; }
.mode { width: 137px; padding: 0 7px; }
.mode .i { margin-right: 7px; }
.orient { width: 99px; padding: 0 7px 0 5px; }
.nbar .start { width: 578px; padding-left: 9px; }
.stype { width: 112px; padding: 0 5px; }
.stype .i { margin-right: 8px; }
.slot { width: 100px; padding: 0 8px; }
.check { width: 17px; height: 17px; border-radius: 3px; background: #545454; flex: none; }
.check.on { background: #4772b3; color: #fff; margin: 4px 0 0 11px; }
.check svg { width: 17px; height: 17px; }
.usenodes { color: #f0f0f0; margin: 4px 0 0 -1px; }
.nbar .pin { margin: 4px 0 0 5px; }
.pin { color: #999; }
.off { background: #282828; border-color: #2d2d2d; }
.off .i { color: #555; }

.editor { flex: 1; display: flex; flex-direction: column; background: #1d1d1d; border-radius: 6px; overflow: hidden; }
.body { flex: 1; display: flex; background: #181818; }
.canvas {
  width: 1310px; position: relative; overflow: hidden; background-color: #1d1d1d;
  background-image: conic-gradient(from 270deg at 4px 4px, #282828 90deg, transparent 0);
  background-size: 35.650px 35.650px; background-position: 8px 21px;
}
.crumbs { display: flex; align-items: center; height: 18px; margin-top: 19px; }
.crumbs .first { width: 13px; height: 13px; margin: 0 14px 0 -4px; background: #181818; }
.crumbs span { margin-left: 11px; }
.crumbs .sep { width: 16px; margin: 0 10px 0 14px; }

/* nodes */
.node { position: absolute; background: #303030; border-radius: 4px; box-shadow: 0 1px 8px 2px rgba(0, 0, 0, .55); font-size: 9.300px; line-height: 12px; color: #e0e0e0; }
.node h3 { height: 18px; border-radius: 4px 4px 0 0; font-size: 9.300px; line-height: 17px; display: flex; align-items: center; padding-left: 8px; border-bottom: 1px solid rgba(0, 0, 0, .3); }
.node h3 .v { margin-right: 5px; color: #ccc; }
.node .v { width: 10px; height: 10px; }
.red { background: #83314a; } .blueh { background: #3c3c83; } .orange { background: #79461d; } .green { background: #2b652b; }
.r { height: 20px; padding: 0 10px 0 9.500px; position: relative; display: flex; align-items: center; }
.out { justify-content: flex-end; padding-right: 11px; }
.s { position: absolute; left: -4.500px; top: 6px; width: 8px; height: 8px; border-radius: 50%; background: #a1a1a1; box-shadow: 0 0 0 .8px #111; }
.out .s { left: auto; right: -4px; }
.vec { background: #6363c7; } .col { background: #c7c729; }
.texcoord { left: 95px; top: 271px; width: 124px; height: 212.500px; }
.texcoord h3, .noise h3, .bsdf h3 { margin-bottom: 2.500px; }
.objrow { margin-top: 7px; padding-right: 9.500px; padding-left: 9px; }
.objfield { margin-left: auto; width: 71px; height: 17px; background: #1d1d1d; border: 1px solid #3d3d3d; border-radius: 3px; display: flex; align-items: center; justify-content: space-between; padding: 0 3px; }
.objfield .o { width: 13px; height: 13px; } .objfield .p { width: 12px; height: 12px; color: #888; }
.instrow { margin-top: 2px; padding-left: 8.500px; }
.cb { width: 13px; height: 13px; background: #545454; border-radius: 2px; margin-right: 2.500px; }
.mapping { left: 303px; top: 224px; width: 213px; height: 312px; }
.mapping h3 { margin-bottom: 1.500px; line-height: 16px; padding-bottom: 1px; }
.typerow { margin-top: 7.500px; }
.dd { flex: 1; height: 17px; background: #282828; border: 1px solid #3d3d3d; border-radius: 3px; padding: 0 0 0 6px; display: flex; align-items: center; overflow: hidden; }
.dd .v { margin-left: auto; }
.typerow .dd { flex: none; width: 146px; margin-left: auto; }
.vrow { margin-top: 1.500px; }
.xyz { position: relative; margin: 0 10px 0 9px; height: 52px; display: flex; flex-direction: column; gap: 1px; }
.xyz .s { left: -13.500px; top: 13px; }
.xyz p { flex: 1; background: #545454; display: flex; justify-content: space-between; align-items: center; padding: 0 13px; }
.xyz p:nth-of-type(1) { border-radius: 3px 3px 0 0; } .xyz p:nth-of-type(3) { border-radius: 0 0 3px 3px; }
.gap { margin-top: 1.500px; }
.noise { left: 620px; top: 227px; width: 125px; height: 192px; }
.noise .ddrow { margin-top: 6.500px; }
.noise .vrow { margin-top: 2px; }
.num { flex: 1; height: 16px; background: #545454; border-radius: 3px; display: flex; justify-content: space-between; align-items: center; padding: 0 13px; }
.num.sl { padding: 0 8px; background: linear-gradient(90deg, #4772b3 var(--v), #545454 var(--v)); }
.bsdf { left: 843px; top: 157px; width: 214px; height: 594px; }
.bsdf .r { padding-left: 9px; }
.bsdf .ddrow { margin-top: 29px; }
.bsdf .ddrow2 { margin-top: 3px; }
.bsdf .base { margin-top: 1.500px; }
.tight { margin-top: -1px; }
.swatch { margin-left: auto; width: 113px; height: 17px; background: #000; border: 1px solid #3d3d3d; border-radius: 3px; }
.links { position: absolute; inset: 0; width: 1310px; height: 889px; }

/* sidebar */
.side { width: 249px; background: #303030; padding: 2px 9px 0 10px; }
.panel { background: #3d3d3d; border-radius: 5px; margin-bottom: 2px; }
.side .panel:first-child { height: 138px; }
.ph { height: 31px; display: flex; align-items: center; padding: 0 9px; color: #efefef; }
.ph .ar { width: 12px; height: 14px; margin-right: 6px; }
.ph .ar, .crow .ar, .delta .ar { color: #c0c0c0; }
.grip { width: 15px; height: 8px; margin-left: auto; }
.frow { display: flex; align-items: center; height: 23px; margin: 11px 11px 0; }
.frow + .frow { margin-top: 8px; }
.frow label { width: 52px; }
.nf { flex: 1; height: 22px; background: #1d1d1d; border-radius: 4px; display: flex; align-items: center; padding-left: 5px; }
.nf .i { margin-right: 9px; }
.crow { display: flex; align-items: center; margin-top: 19px; padding-left: 27px; color: #efefef; }
.crow .ar { width: 14px; height: 14px; margin-right: 2px; }
.crow span { margin-left: 3px; }
.lst { margin: 0 36px 0 auto; }
.vtabs { width: 25px; background: #181818; padding-top: 6px; }
.vtabs span { display: flex; align-items: center; justify-content: center; width: 22px; margin-bottom: 6px; writing-mode: vertical-rl; transform: rotate(180deg); background: #1d1d1d; border: 1px solid #3d3d3d; border-right: 0; border-radius: 4px 0 0 4px; }
.vtabs .on { background: #303030; color: #fff; }
.t1 { height: 57px; } .t2 { height: 50px; } .t3 { height: 54px; } .t4 { height: 64px; } .t5 { height: 73px; } .t6 { height: 52px; } .t7 { height: 127px; }

/* outliner */
.right { width: 331px; display: flex; flex-direction: column; gap: 3px; }
.outliner { height: 305px; background: #282828; border-radius: 6px; overflow: hidden; }
.obar { height: 33px; padding-left: 10px; gap: 6px; background: #2b2b2b; }
.find { background: #1d1d1d; padding: 3px 5px; }
.obar .find { width: 144px; margin-left: 13px; }
.flt { margin-left: 13px; }
.rows { position: relative; height: 272px; background: repeating-linear-gradient(#282828 0 24.800px, #2b2b2b 24.800px 49.600px); }
.row { height: 24.800px; display: flex; align-items: center; color: #c3c3c3; }
.row span { padding-top: 2px; }
.root { padding-left: 29px; } .root span { margin-left: 8px; }
.halo { width: 25px; height: 23px; border-radius: 5px; background: #4d4d4d; display: flex; align-items: center; justify-content: center; }
.coll { padding-left: 32px; } .coll .halo { margin: 0 5px 0 8px; }
.tdown { border: 5px solid transparent; border-top: 8px solid #c0c0c0; border-bottom: 0; }
.tright { border: 4.500px solid transparent; border-left: 8px solid #c0c0c0; border-right: 0; }
.item { padding-left: 59px; }
.item .ic { width: 25px; height: 23px; margin: 0 5px 0 8px; display: flex; align-items: center; justify-content: center; border-radius: 5px; }
.item .halo2 { background: #56698f; }
.brown { color: #c27b45; } .peach { color: #cf8d5b; } .teal { color: #16b28c; }
.picked { background: #334d80; color: #f5a42a; }
.d1 { margin-left: 25px; } .d2 { margin-left: 28px; } .d3 { margin-left: 27px; }
.tog { margin-left: auto; display: flex; align-items: center; gap: 7px; padding-right: 12px; }
.wcheck { width: 14px; height: 14px; background: #e6e6e6; border-radius: 2px; color: #282828; margin-right: 3px; }
.wcheck svg { width: 14px; height: 14px; }
.tree { position: absolute; left: 35px; top: 55px; width: 1px; height: 63px; background: #666; }

/* properties */
.props { flex: 1; min-height: 0; background: #303030; border-radius: 6px; overflow: hidden; display: flex; flex-direction: column; }
.pbar { height: 31px; padding: 3px 10px 0; }
.pbar .find { width: 144px; margin-left: 39px; }
.opt { margin-left: auto; }
.pbody { flex: 1; min-height: 0; display: flex; }
.ptabs { width: 35px; background: #1d1d1d; }
.ptabs b { height: 35px; display: flex; align-items: center; justify-content: center; padding-left: 2px; }
.ptabs .i { color: #b0b0b0; }
.ptabs .g1 { height: 44px; padding-top: 10px; margin-bottom: 9px; }
.ptabs .ln { border-bottom: 1px solid #181818; }
.ptabs .g2, .ptabs .g4 { height: 44px; padding-top: 12px; }
.ptabs .g3 { height: 33px; margin: 10px 0 1px 2px; padding: 0; background: #303030; border-radius: 4px 0 0 4px; }
.ptabs .rose .i { color: #b3555c; } .ptabs .sky .i { color: #5b86d4; } .ptabs .tl .i { color: #16b28c; } .ptabs .act .i { color: #e69753; } .ptabs .g2 .i { color: #e0e0e0; }
.pmain { flex: 1; padding: 13px 9px 0 10px; overflow: hidden; }
.pcrumb { display: flex; align-items: center; height: 18px; padding: 0 3px; }
.pcrumb span { margin-left: 11px; } .pcrumb .pin { margin-left: auto; }
.idb { margin: 24px 0 12px; }
.idb .field { flex: 1; }
.pmain .panel:nth-of-type(3) { height: 350px; }
.vecs { margin: 7.300px 0 0; display: flex; flex-direction: column; gap: 1px; }
.ph + .vecs { margin-top: 11px; }
.vr { height: 24px; display: flex; align-items: center; }
.vecs .vr:first-child { height: 23.500px; }
.vr label { width: 96px; text-align: right; margin-right: 13px; }
.vr em { width: 107px; height: 100%; background: #545454; text-align: center; padding-top: 3px; }
.vecs .vr:first-child em { border-radius: 4px 0 0 0; } .vecs .vr:last-child em { border-radius: 0 0 0 4px; }
.lock { width: 18px; height: 16px; margin: 0 14px 0 4px; color: #a0a0a0; }
.vr i { width: 5px; height: 5px; border-radius: 50%; background: #ddd; }
.euler { width: 107px; height: 23px; margin-right: 36px; background: #282828; border-radius: 4px; display: flex; align-items: center; padding: 0 2px 0 9px; }
.euler .v { margin-left: auto; }
.delta { display: flex; align-items: center; margin: 19.500px 0 0 27px; }
.delta .ar { width: 13px; height: 14px; margin-right: 4px; }
.pmain .last { height: 31px; }

/* popups */
.menu { position: absolute; background: #181818; border: 1px solid #242424; box-shadow: 0 2px 6px rgba(0, 0, 0, .4); color: #dcdcdc; }
.mt { height: 37px; padding: 9px 10px; color: #9a9a9a; border-bottom: 1px solid #303030; }
.mi { height: 25px; display: flex; align-items: center; padding-left: 37px; margin: 0 4px; border-radius: 4px; position: relative; white-space: pre; }
.mi u { text-underline-offset: 3px; text-decoration-thickness: 1px; text-decoration-skip-ink: none; }
.mi.sub::after { content: ""; position: absolute; right: 6px; top: 8.500px; border: 4.500px solid transparent; border-left: 7px solid #999; border-right: 0; }
.hot { color: #fff; }
.hot::before { content: ""; position: absolute; inset: 1px 0; background: #4772b3; border-radius: 4px; z-index: -1; }
.hot.sub::after { border-left-color: #cfdcf0; }
.menu.add { left: 866px; top: 163px; width: 227px; height: 359px; border-radius: 5px; z-index: 1; }
.menu .srch { height: 35px; margin: 0; padding: 0 0 2px 14px; }
.srch .i { margin-right: 9px; }
.add .ml { border-top: 1px solid #303030; padding-top: 4px; }
.menu.input { left: 1092px; top: 235px; width: 232px; height: 546px; border-radius: 5px; z-index: 2; }
.input .vc { height: 35px; margin: 0 0 3px; padding: 0 0 1px 40px; }
.input .vc.sub::after { top: 12px; right: 9px; }
.input .ml { border-top: 1px solid #303030; margin-top: -2px; }
.input .ml .mi { margin: 0 4px 0 3px; }
.input .ml .mi:first-child { height: 26.600px; padding-top: 5px; }
.tooltip { position: absolute; left: 1240px; top: 664px; width: 226px; height: 39px; z-index: 3; background: #191919; border: 1px solid #242424; border-radius: 5px; padding: 11px 15px; box-shadow: 0 2px 6px rgba(0, 0, 0, .5); }

/* status bar */
.status { height: 24px; flex: none; background: #1d1d1d; color: #8a8a8a; display: flex; align-items: center; padding: 0 10px 1px 14px; }
.status span { display: flex; align-items: center; }
.status svg { width: 14px; height: 20px; margin-right: 14px; }
.k1 { width: 82px; } .k2 { width: 200px; } .k3 { width: 281px; }
.status .k2 svg { margin-right: 1px; }
.status .k2 .drag { width: 5px; margin-right: 10px; fill: none; stroke: #8a8a8a; }
.ver { margin-left: auto; }

/* taskbar */
.taskbar { height: 38px; flex: none; background: #101010; display: flex; text-shadow: none; color: #fff; }
.start-btn { width: 20px; height: 20px; margin: 9px 0 0 12px; }
.apps { display: flex; gap: 1.080px; margin-left: 358px; }
.apps b { width: 45px; position: relative; display: flex; justify-content: center; padding-top: 9px; }
.apps svg { width: 20px; height: 20px; }
.apps .bl { color: #ea7600; --hole: #fff; --eye: #265787; }
.apps .run::after { content: ""; position: absolute; left: 5px; right: 5px; bottom: 0; height: 3px; background: #76b9ed; }
.apps .multi::after { background: linear-gradient(90deg, #76b9ed 70%, #4c7ea5 70%); }
.apps .act { background: #333; }
.apps .act::after { left: 0; right: 0; }
.rl { position: absolute; top: 9px; font: 14px/20px "Liberation Serif", serif; }
.tray { margin-left: auto; display: flex; align-items: flex-start; gap: 9.900px; padding: 9px 31px 0 0; font: 14px/20px "Open Sans", "Noto Sans", sans-serif; }
.tray svg { width: 20px; height: 20px; }
.lang { width: 29px; margin-left: 4px; letter-spacing: -.6px; }
.clock { width: 36px; margin: 0 13px 0 6px; letter-spacing: -.5px; }
```
